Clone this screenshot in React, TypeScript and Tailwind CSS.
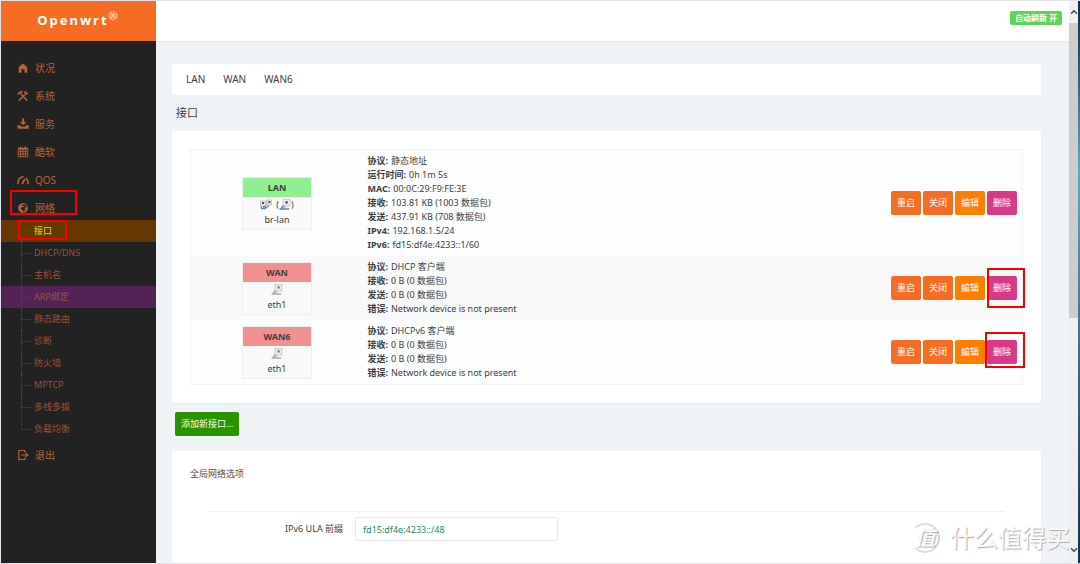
import type { ReactNode } from "react"
import { FaGlobeAfrica } from "react-icons/fa"
import { ChevronDown, ChevronUp } from "lucide-react"

type MenuItem = {
  label: string
  icon: ReactNode
}

type Iface = {
  name: string
  device: string
  up: boolean
  bridge?: boolean
  mark?: string
  info: [string, string][]
}

const HomeIcon = () => (
  <svg viewBox="0 0 20 20" className="size-3" fill="currentColor">
    <path d="M10 2.500 L17 8.500 V18 H12.500 V12 H7.500 V18 H3 V8.500 Z" />
  </svg>
)

const ToolsIcon = () => (
  <svg viewBox="0 0 20 20" className="size-3" fill="none" stroke="currentColor" strokeWidth="2.4">
    <path d="M3 18 L13 8 M17 18 L6 6" />
    <path d="M1.500 7.500 L4.500 4 L9.500 2.500" strokeWidth="2.800" />
    <path d="M15.500 1.500 L13 4.500 L15.500 7 L18.500 4.500" />
  </svg>
)

const InboxIcon = () => (
  <svg viewBox="0 0 20 20" className="size-3" fill="currentColor">
    <path d="M8.500 1h3.500v5.500h3.500L10.200 12 5 6.500h3.500z" />
    <path d="M1 12h4.500l2 2.500h5.500L15 12h4.500v6H1z" />
  </svg>
)

const CalendarIcon = () => (
  <svg viewBox="0 0 20 20" className="size-3" fill="none" stroke="currentColor">
    <path d="M2 4.500 H18" strokeWidth="3.500" />
    <path d="M6 1 V4 M14 1 V4" strokeWidth="2.500" />
    <path d="M2 5 V18 H18 V5 M2 9.500 H18 M2 13.500 H18 M6 6 V18 M10 6 V18 M14 6 V18" strokeWidth="1.500" />
  </svg>
)

const GaugeIcon = () => (
  <svg viewBox="0 0 20 20" className="size-3" fill="none" stroke="currentColor" strokeWidth="2.600">
    <path d="M1.800 17 C1 9 5 4.500 11 4.500 M14.500 6.500 C17.500 8.500 18.800 12 18.200 17" />
    <path d="M8.500 17 L13 8" strokeWidth="3" />
  </svg>
)

const ExitIcon = () => (
  <svg viewBox="0 0 20 20" className="size-3" fill="none" stroke="currentColor" strokeWidth="2">
    <path d="M13 6 V2.500 H3 V17.500 H13 V14 M7 10 H17 M14 6.500 L18 10 L14 13.500" />
  </svg>
)

const menu: MenuItem[] = [
  { label: "状况", icon: <HomeIcon /> },
  { label: "系统", icon: <ToolsIcon /> },
  { label: "服务", icon: <InboxIcon /> },
  { label: "酷软", icon: <CalendarIcon /> },
  { label: "QOS", icon: <GaugeIcon /> },
]

const subMenu = ["接口", "DHCP/DNS", "主机名", "ARP绑定", "静态路由", "诊断", "防火墙", "MPTCP", "多线多拨", "负载均衡"]

const ifaces: Iface[] = [
  {
    name: "LAN",
    device: "br-lan",
    up: true,
    bridge: true,
    info: [
      ["协议:", "静态地址"],
      ["运行时间:", "0h 1m 5s"],
      ["MAC:", "00:0C:29:F9:FE:3E"],
      ["接收:", "103.81 KB (1003 数据包)"],
      ["发送:", "437.91 KB (708 数据包)"],
      ["IPv4:", "192.168.1.5/24"],
      ["IPv6:", "fd15:df4e:4233::1/60"],
    ],
  },
  {
    name: "WAN",
    device: "eth1",
    up: false,
    mark: "left-0 -right-2 -top-2 -bottom-2",
    info: [
      ["协议:", "DHCP 客户端"],
      ["接收:", "0 B (0 数据包)"],
      ["发送:", "0 B (0 数据包)"],
      ["错误:", "Network device is not present"],
    ],
  },
  {
    name: "WAN6",
    device: "eth1",
    up: false,
    mark: "-left-[2px] -right-2 -top-2 -bottom-1",
    info: [
      ["协议:", "DHCPv6 客户端"],
      ["接收:", "0 B (0 数据包)"],
      ["发送:", "0 B (0 数据包)"],
      ["错误:", "Network device is not present"],
    ],
  },
]

function PortIcon({ active }: { active: boolean }) {
  return (
    <svg viewBox="0 0 12 12" className="size-3">
      <rect x="4" y="0.500" width="7" height="6.500" fill="#ecece8" stroke="#c4c4c4" strokeWidth="0.800" />
      <rect x="6.500" y="2.300" width="2.200" height="2.200" fill={active ? "#3a3a3a" : "#777"} />
      <path d="M4.500 6.500 L1.500 10 H10" fill="none" stroke={active ? "#5a80bd" : "#a5a5a5"} strokeWidth="1.300" />
      <path d="M2 8 L5 8.500 L7 7.500" fill="none" stroke={active ? "#8aa5cf" : "#b5b5b5"} />
    </svg>
  )
}

function BridgeIcon() {
  return (
    <svg viewBox="0 0 12 12" className="size-3">
      <rect x="0.500" y="2" width="5" height="5" fill="#e4e4de" stroke="#b5b5b5" strokeWidth="0.700" />
      <rect x="6.500" y="1" width="5" height="5" fill="#e4e4de" stroke="#b5b5b5" strokeWidth="0.700" />
      <rect x="2.200" y="3.200" width="1.800" height="1.800" fill="#333" />
      <rect x="8.500" y="2.200" width="1.800" height="1.800" fill="#333" />
      <path d="M1 7.500 L1.500 9.500 L5 9.500 L9 6.500 M3 8 L6 7.500" fill="none" stroke="#5f86bd" strokeWidth="1.300" />
    </svg>
  )
}

function IfaceBox({ iface }: { iface: Iface }) {
  return (
    <div className="ml-[51px] w-[70px] border border-[#edf0f0] bg-[#f9f9f9] text-center">
      <div className={`h-[19px] font-bold leading-[19px] ${iface.up ? "bg-[#90f090]" : "bg-[#f09090]"}`}>{iface.name}</div>
      <div className="flex h-4 items-center justify-center">
        {iface.bridge ? (
          <>
            <BridgeIcon />
            <span className="ml-1">(</span>
            <PortIcon active />
            <span>)</span>
          </>
        ) : (
          <PortIcon active={false} />
        )}
      </div>
      <div className="h-4 leading-[14px]">{iface.device}</div>
    </div>
  )
}

function Actions({ mark }: { mark?: string }) {
  const base = "h-6 w-[30px] rounded-xs text-[9px] text-white"
  return (
    <div className="flex justify-end gap-[2px] pr-[5px]">
      <button className={`${base} bg-[#f56c22]`}>重启</button>
      <button className={`${base} bg-[#f56c22]`}>关闭</button>
      <button className={`${base} bg-[#ff7d00]`}>编辑</button>
      <div className="relative">
        <button className={`${base} bg-[#d93a87]`}>删除</button>
        {mark && <span className={`pointer-events-none absolute border-2 border-[#f80000] ${mark}`} />}
      </div>
    </div>
  )
}

function Sidebar() {
  const link = "relative flex h-7 items-center gap-1.5 pl-4 text-[10px]"
  return (
    <aside className="w-[155px] shrink-0 bg-[#222] text-[#b3623d]">
      <a href="#" className="flex h-10 items-center justify-center bg-[#f56c22] text-[13px] font-bold tracking-[2px] text-white">
        <span>
          Openwrt<sup className="text-[11px] font-normal">®</sup>
        </span>
      </a>
      <ul className="pt-[13px]">
        {menu.map((item) => (
          <li key={item.label}>
            <a href="#" className={link}>
              {item.icon}
              {item.label}
            </a>
          </li>
        ))}
        <li>
          <a href="#" className={link}>
            <FaGlobeAfrica className="mx-px" />
            网络
            <span className="pointer-events-none absolute -top-1 left-[9px] h-[25px] w-[67px] border-2 border-[#f80000]" />
          </a>
          <ul className="-mt-[2px] pb-px">
            {subMenu.map((label, i) => (
              <li key={label}>
                <a
                  href="#"
                  className={`relative flex h-[22px] items-center pl-5 text-[9px] ${
                    i === 0 ? "bg-[#673700] text-[#f0d800]" : i === 3 ? "bg-[#552255] text-[#9c5037]" : "text-[#9c5037]"
                  }`}
                >
                  <span
                    className={`w-px border-l border-dotted border-[#65451f] ${
                      i === 0 || i === subMenu.length - 1 ? "h-[11px]" : "h-full"
                    } ${i === 0 ? "self-end" : "self-start"}`}
                  />
                  <span className="mr-[3px] w-[9px] border-t border-dotted border-[#65451f]" />
                  {label}
                  {i === 0 && <span className="pointer-events-none absolute left-[17px] top-0 h-5 w-[49px] border-2 border-[#f80000]" />}
                </a>
              </li>
            ))}
          </ul>
        </li>
        <li>
          <a href="#" className={link}>
            <ExitIcon />
            退出
          </a>
        </li>
      </ul>
    </aside>
  )
}

function Watermark() {
  return (
    <div className="pointer-events-none absolute bottom-[9px] right-[10px] flex items-center gap-2.5 text-[#fafafa] [text-shadow:1px_1px_1px_#aaa]">
      <span className="flex size-[30px] items-center justify-center rounded-full border-2 border-y-[#ddd] border-l-transparent border-r-[#d4d4d4] text-xl font-bold italic">
        值
      </span>
      <span className="text-2xl leading-8">什么值得买</span>
    </div>
  )
}

export default function App() {
  return (
    <div className="relative flex h-screen overflow-hidden border-y border-l border-[#dfe3ee] bg-[#eff3f5] font-['Noto_Sans','Noto_Sans_CJK_SC',sans-serif] text-[9px] text-[#404040]">
      <Sidebar />

      <main className="min-w-0 flex-1">
        <header className="flex h-10 items-start justify-end bg-white pr-[7px] pt-[10px] shadow-xs">
          <button className="h-[14px] w-[52px] rounded-xs bg-[#5bd65b] text-[8px] font-bold leading-[14px] text-white">自动刷新 开</button>
        </header>

        <div className="pl-4 pr-7 pt-[23px]">
          <nav className="flex h-[31px] items-center gap-[18px] bg-white px-3.5 text-[10px]">
            <a href="#">LAN</a>
            <a href="#">WAN</a>
            <a href="#">WAN6</a>
          </nav>
          <h2 className="h-9 pl-1 text-[11px] leading-9">接口</h2>

          <section className="rounded-xs bg-white px-[18px] py-[18px] shadow-xs">
            <table className="w-full border border-[#eff1f2]">
              <tbody>
                {ifaces.map((iface) => (
                  <tr key={iface.name} className="bg-[#fcfefd] even:bg-[#f9f9f9]">
                    <td className="w-[177px]">
                      <IfaceBox iface={iface} />
                    </td>
                    <td className="py-1">
                      {iface.info.map(([key, value]) => (
                        <div key={key} className="flex gap-[3px] leading-[14px]">
                          <b>{key}</b>
                          <span>{value}</span>
                        </div>
                      ))}
                    </td>
                    <td>
                      <Actions mark={iface.mark} />
                    </td>
                  </tr>
                ))}
              </tbody>
            </table>
          </section>

          <button className="my-[9px] ml-[3px] h-6 w-16 rounded-xs bg-[#289400] text-[9px] text-white">添加新接口...</button>

          <section className="mt-[6px] h-40 rounded-xs bg-white px-[18px] pt-4 shadow-xs">
            <h3 className="leading-[14px] text-[#5f4a38]">全局网络选项</h3>
            <div className="mx-[18px] mt-[30px] flex items-center gap-3 border-t border-dotted border-[#e4e4e4] pt-[5px]">
              <label htmlFor="ula" className="w-[135px] text-right">IPv6 ULA 前缀</label>
              <input
                id="ula"
                defaultValue="fd15:df4e:4233::/48"
                className="h-6 w-[203px] rounded-xs border border-[#e6ecee] px-[7px] text-[#1e8770] outline-none"
              />
            </div>
          </section>
        </div>
      </main>

      <div className="flex w-[9px] shrink-0 flex-col items-center bg-[#f0f0f0] text-[#505050]">
        <ChevronUp className="my-[6px] size-[10px] shrink-0" strokeWidth={4} />
        <div className="h-[295px] w-full shrink-0 bg-[#cdcdcd]" />
        <ChevronDown className="mb-2 mt-auto size-[10px] shrink-0" strokeWidth={4} />
      </div>
      <div className="w-[2px] shrink-0 bg-linear-to-b from-[#0d2c4c] via-[#5fa8c8] via-30% to-[#12304f]" />

      <Watermark />
    </div>
  )
}
